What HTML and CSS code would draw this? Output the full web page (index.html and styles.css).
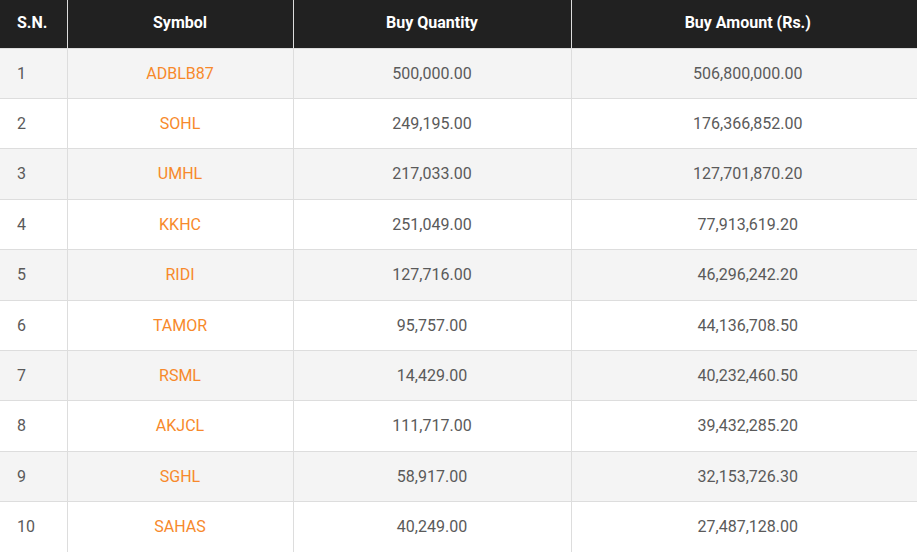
FILE: index.html
```html
<!DOCTYPE html>
<html lang="en">
<head>
<meta charset="utf-8">
<title>Top Buyers</title>
<link rel="stylesheet" href="styles.css">
</head>
<body>
<div class="wrap">
<table class="grid">
  <colgroup>
    <col class="c-sn">
    <col class="c-sym">
    <col class="c-qty">
    <col class="c-amt">
  </colgroup>
  <thead>
    <tr><th class="sn">S.N.</th><th>Symbol</th><th>Buy Quantity</th><th>Buy Amount (Rs.)</th></tr>
  </thead>
  <tbody>
    <tr><td class="sn">1</td><td class="sym">ADBLB87</td><td>500,000.00</td><td>506,800,000.00</td></tr>
    <tr><td class="sn">2</td><td class="sym">SOHL</td><td>249,195.00</td><td>176,366,852.00</td></tr>
    <tr><td class="sn">3</td><td class="sym">UMHL</td><td>217,033.00</td><td>127,701,870.20</td></tr>
    <tr><td class="sn">4</td><td class="sym">KKHC</td><td>251,049.00</td><td>77,913,619.20</td></tr>
    <tr><td class="sn">5</td><td class="sym">RIDI</td><td>127,716.00</td><td>46,296,242.20</td></tr>
    <tr><td class="sn">6</td><td class="sym">TAMOR</td><td>95,757.00</td><td>44,136,708.50</td></tr>
    <tr><td class="sn">7</td><td class="sym">RSML</td><td>14,429.00</td><td>40,232,460.50</td></tr>
    <tr><td class="sn">8</td><td class="sym">AKJCL</td><td>111,717.00</td><td>39,432,285.20</td></tr>
    <tr><td class="sn">9</td><td class="sym">SGHL</td><td>58,917.00</td><td>32,153,726.30</td></tr>
    <tr><td class="sn">10</td><td class="sym">SAHAS</td><td>40,249.00</td><td>27,487,128.00</td></tr>
  </tbody>
</table>
</div>
</body>
</html>
```
FILE: styles.css
```css
html, body {
  margin: 0;
  padding: 0;
  background: #ffffff;
}
body {
  font-family: Roboto, "Liberation Sans", sans-serif;
  font-size: 16px;
  color: #5a5a5a;
}
.wrap {
  width: 917px;
  overflow: hidden;
}
.grid {
  width: 924px;
  border-collapse: collapse;
  table-layout: fixed;
}
.c-sn { width: 67px; }
.c-sym { width: 226px; }
.c-qty { width: 278px; }
.c-amt { width: 353px; }
.grid th {
  background: #212121;
  color: #ffffff;
  font-weight: 700;
  font-size: 16px;
  height: 48px;
  padding: 0 8px 1px;
  line-height: 20px;
  text-align: center;
  border-left: 1px solid #dddddd;
  border-bottom: 1px solid #dddddd;
  box-sizing: border-box;
}
.grid th:first-child,
.grid td:first-child {
  border-left: none;
}
.grid th.sn,
.grid td.sn {
  text-align: left;
  padding-left: 17px;
}
.grid td {
  padding: 12px 8px;
  line-height: 25.4px;
  text-align: center;
  border-left: 1px solid #dddddd;
  border-bottom: 1px solid #dddddd;
}
.grid tbody tr:nth-child(odd) td {
  background: #f4f4f4;
}
.grid td.sym {
  color: #f7892b;
}
```
